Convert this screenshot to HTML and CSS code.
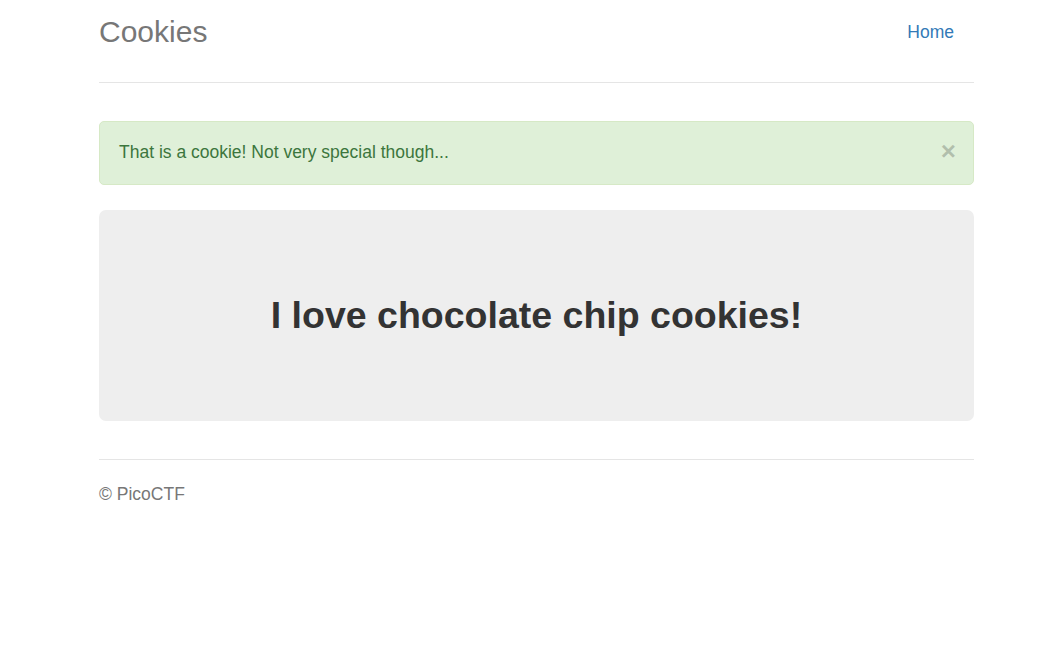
FILE: index.html
```html
<!DOCTYPE html>
<html lang="en">
<head>
<meta charset="utf-8">
<title>Cookies</title>
<link rel="stylesheet" href="styles.css">
</head>
<body>
<div class="container">
  <div class="header">
    <h3 class="brand">Cookies</h3>
    <nav class="nav"><a class="nav-link" href="#">Home</a></nav>
  </div>
  <div class="alert">
    <span class="alert-text">That is a cookie! Not very special though...</span>
    <button class="close" type="button" aria-label="Close">&times;</button>
  </div>
  <div class="jumbotron">
    <h1 class="jumbo-title">I love chocolate chip cookies!</h1>
  </div>
  <footer class="footer">
    <p class="footer-text">&copy; PicoCTF</p>
  </footer>
</div>
</body>
</html>
```

FILE: styles.css
```css
html, body {
  margin: 0;
  padding: 0;
  background: #fff;
}
body {
  font-family: "Liberation Sans", Arial, Helvetica, sans-serif;
  font-size: 17.5px;
  line-height: 25px;
  color: #333;
}
.container {
  width: 875px;
  margin-left: 99px;
}
.header {
  display: flex;
  justify-content: space-between;
  align-items: center;
  padding-top: 7px;
  padding-bottom: 25px;
  border-bottom: 1px solid #e5e5e5;
}
.brand {
  margin: 0;
  font-size: 30px;
  line-height: 50px;
  font-weight: normal;
  color: #777;
}
.nav {
  display: flex;
}
.nav-link {
  display: block;
  padding: 13px 20px 12px 18.75px;
  color: #337ab7;
  text-decoration: none;
  border-radius: 5px;
}
.alert {
  margin-top: 38px;
  display: flex;
  justify-content: space-between;
  align-items: flex-start;
  padding: 18px 19px 19px;
  background: #dff0d8;
  border: 1px solid #d6e9c6;
  border-radius: 5px;
  color: #3c763d;
}
.close {
  margin: 0 -2px 0 0;
  padding: 0;
  border: 0;
  background: transparent;
  font-family: "Liberation Sans", Arial, sans-serif;
  font-size: 26px;
  font-weight: bold;
  line-height: 22px;
  color: #000;
  opacity: 0.2;
  text-shadow: 0 1px 0 #fff;
  cursor: pointer;
}
.jumbotron {
  margin-top: 25px;
  height: 211px;
  box-sizing: border-box;
  padding-top: 85px;
  background: #eee;
  border-radius: 7px;
  text-align: center;
}
.jumbo-title {
  margin: 0;
  font-size: 37.5px;
  line-height: 41px;
  font-weight: bold;
  color: #333;
}
.footer {
  margin-top: 38px;
  padding-top: 22px;
  border-top: 1px solid #e5e5e5;
}
.footer-text {
  margin: 0;
  color: #777;
}
```
